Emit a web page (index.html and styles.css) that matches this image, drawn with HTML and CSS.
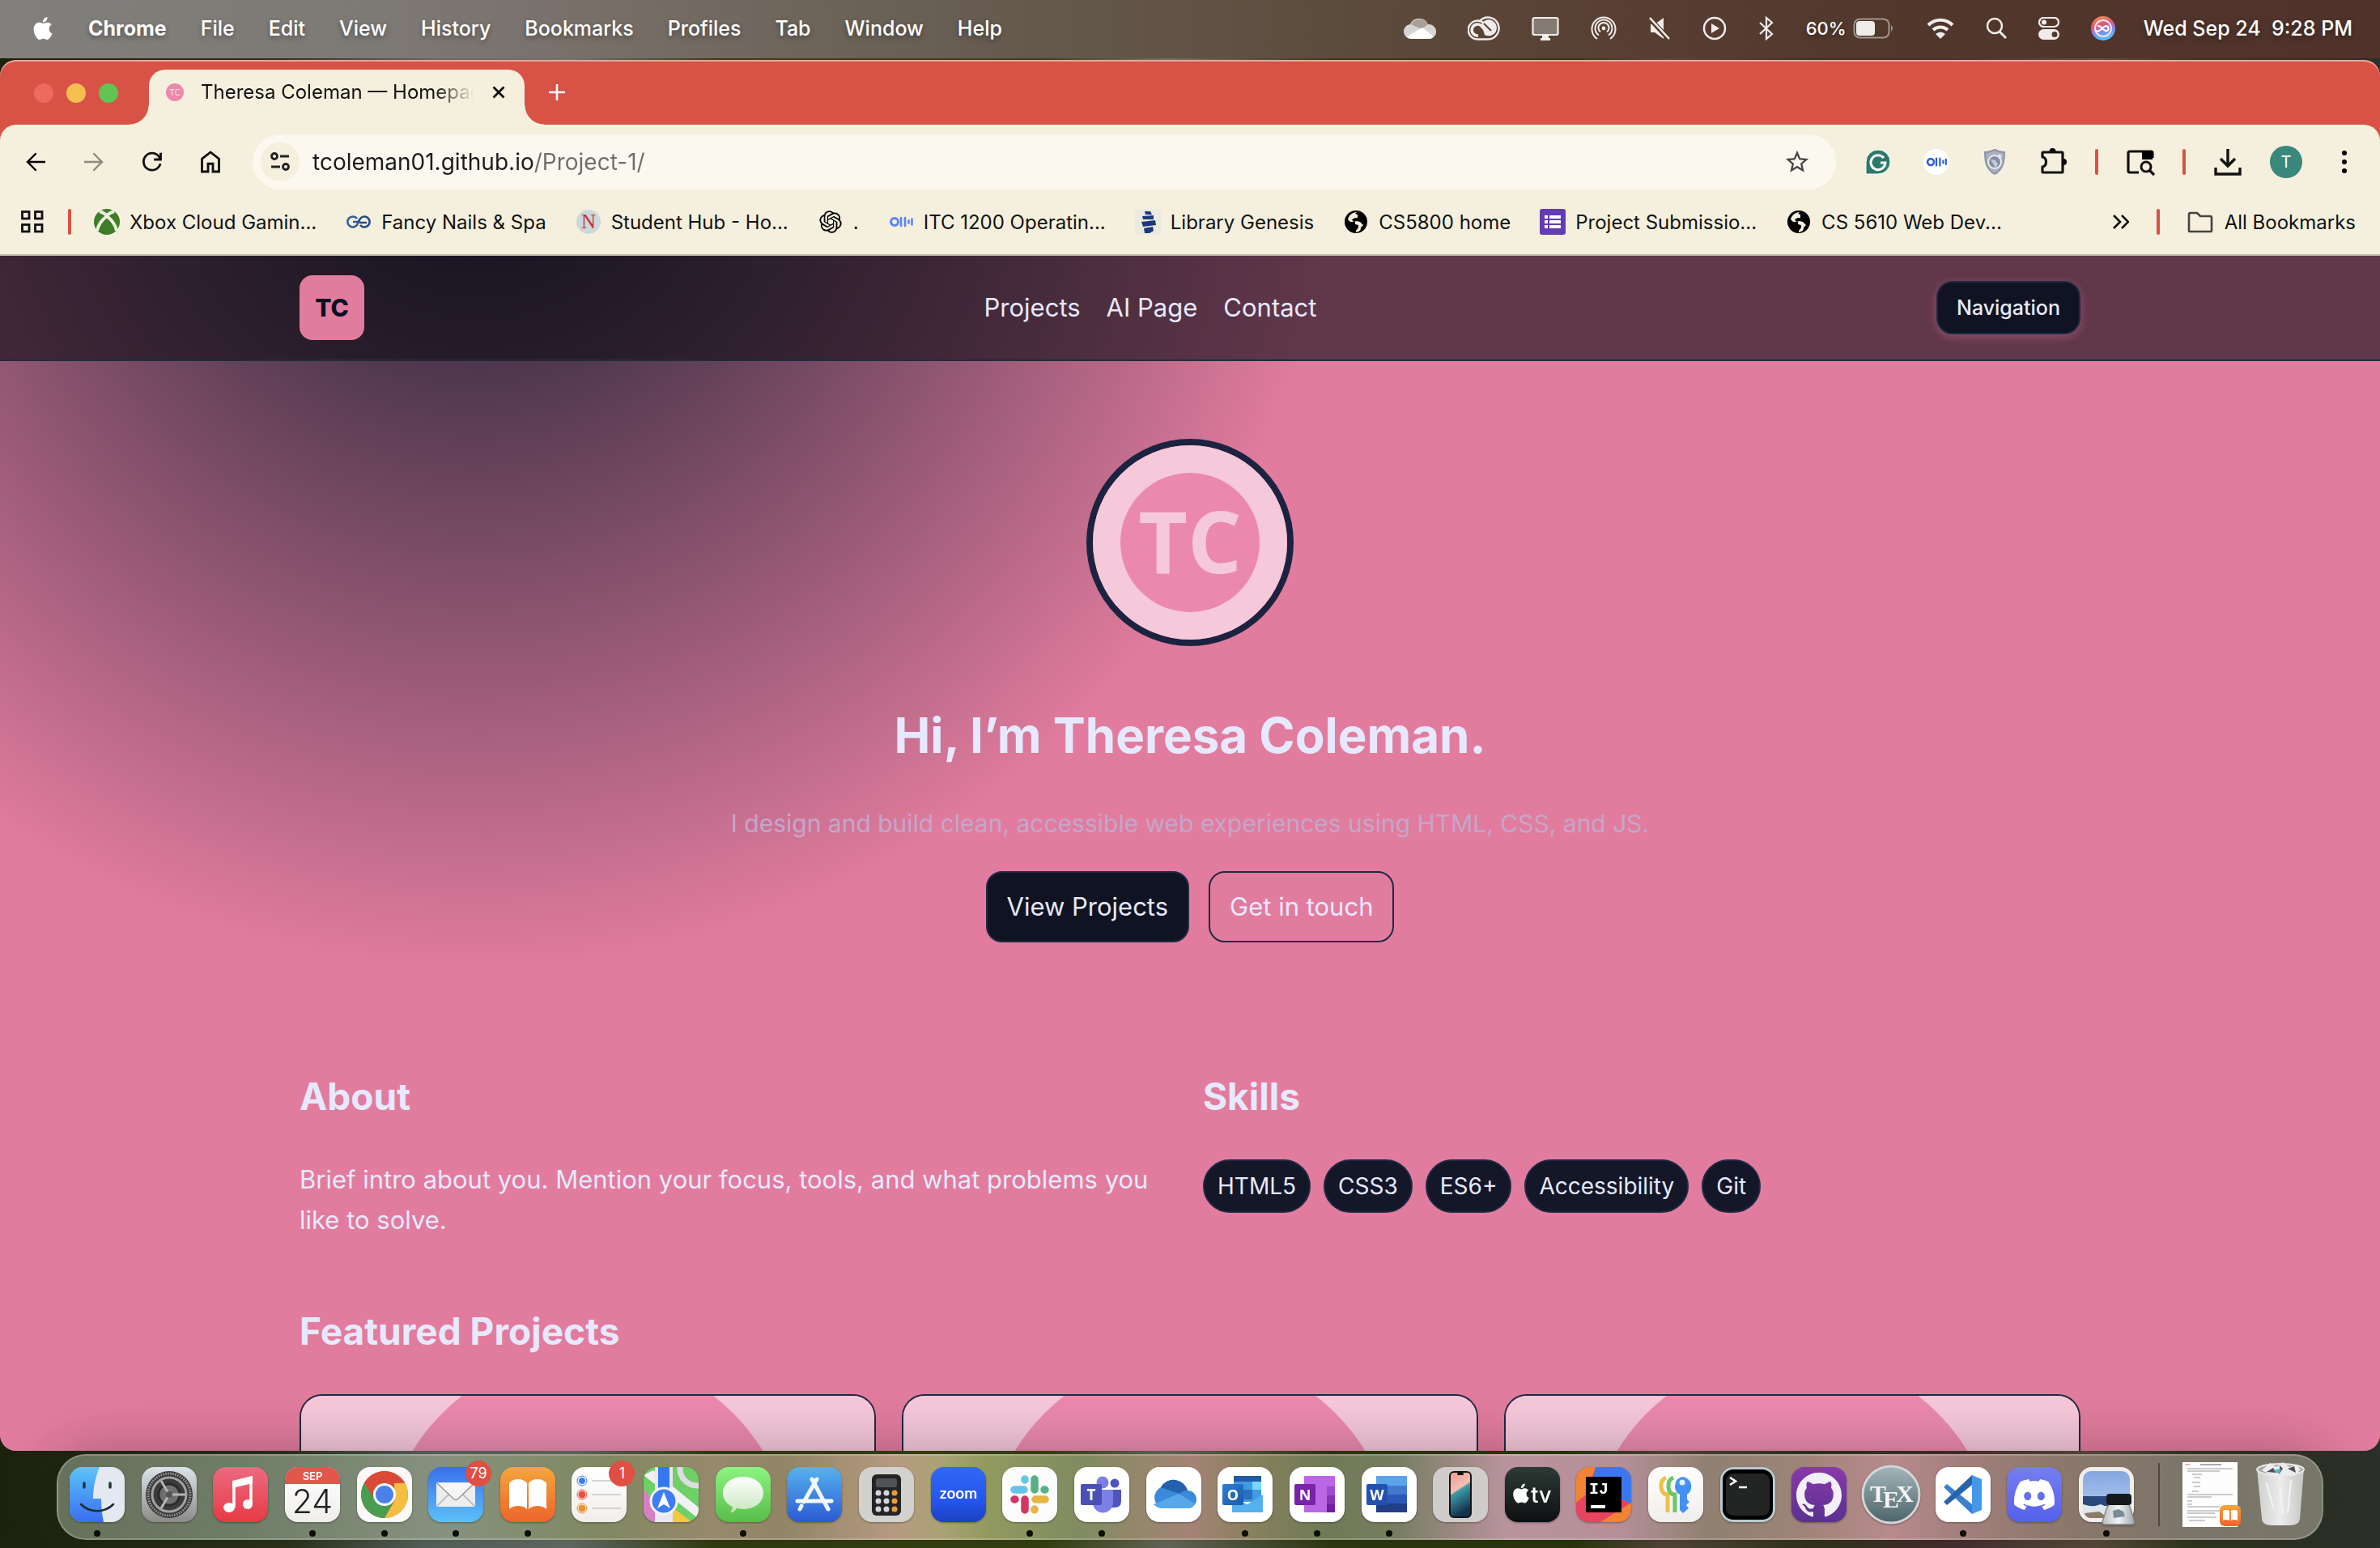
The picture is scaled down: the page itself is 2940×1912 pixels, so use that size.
FILE: index.html
```html
<!DOCTYPE html>
<html lang="en">
<head>
<meta charset="utf-8">
<title>Theresa Coleman — Homepage</title>
<link rel="stylesheet" href="styles.css">
</head>
<body class="desktop">

<svg class="defs" aria-hidden="true">
  <defs>
    <symbol id="apple" viewBox="0 0 24 24"><path d="M12.152 6.896c-.948 0-2.415-1.078-3.96-1.04-2.04.027-3.91 1.183-4.961 3.014-2.117 3.675-.546 9.103 1.519 12.09 1.013 1.454 2.208 3.09 3.792 3.039 1.52-.065 2.09-.987 3.935-.987 1.831 0 2.35.987 3.96.948 1.637-.026 2.676-1.48 3.676-2.948 1.156-1.688 1.636-3.325 1.662-3.415-.039-.013-3.182-1.221-3.22-4.857-.026-3.04 2.48-4.494 2.597-4.559-1.429-2.09-3.623-2.324-4.39-2.376-2-.156-3.675 1.09-4.61 1.09zM15.53 3.83c.843-1.012 1.4-2.427 1.245-3.83-1.207.052-2.662.805-3.532 1.818-.78.896-1.454 2.338-1.273 3.714 1.338.104 2.715-.688 3.559-1.701"/></symbol>
    <symbol id="otter" viewBox="0 0 32 32"><circle cx="8" cy="16" r="4.500" fill="none" stroke="currentColor" stroke-width="3"/><path d="M16 11v10M21 11v10M25.500 14.500v3M29.500 12.500v7" stroke="currentColor" stroke-width="2.600" stroke-linecap="round"/></symbol>
    <symbol id="globe" viewBox="0 0 32 32"><circle cx="16" cy="16" r="14" fill="#000"/><path d="M17 4c-5 0-10 4-11 9l3 3h6v3l4 1v3l-3 4v2c5-1 6-3 6-6l3-3-4-4-4-1-4 1-2-3 4-2h3V7l-3-1z" fill="#f4f0dd"/><path d="M4 15l6 6v6c-4-2-6-6-6-12z" fill="#000"/></symbol>
    <symbol id="avatar-art" viewBox="0 0 240 240"><rect width="240" height="240" fill="#f5c8da"/><circle cx="120" cy="120" r="86" fill="#eb89ac"/><text x="120" y="158" text-anchor="middle" font-family="Open Sans, sans-serif" font-weight="700" font-size="105" fill="#f5c8da">TC</text></symbol>
    <linearGradient id="g-finder" x2="0" y2="1"><stop stop-color="#5ac5f9"/><stop offset="1" stop-color="#3a6df0"/></linearGradient>
    <linearGradient id="g-grey" x2="0" y2="1"><stop stop-color="#dbe4ea"/><stop offset="1" stop-color="#8d8a88"/></linearGradient>
    <linearGradient id="g-music" x2="0" y2="1"><stop stop-color="#ec6a80"/><stop offset="1" stop-color="#e73a45"/></linearGradient>
    <linearGradient id="g-mail" x2="0" y2="1"><stop stop-color="#3a70ea"/><stop offset="1" stop-color="#5cc0f8"/></linearGradient>
    <linearGradient id="g-books" x2="0" y2="1"><stop stop-color="#f3a63d"/><stop offset="1" stop-color="#ee642b"/></linearGradient>
    <linearGradient id="g-msg" x2="0" y2="1"><stop stop-color="#8bf481"/><stop offset="1" stop-color="#58bd4a"/></linearGradient>
    <linearGradient id="g-bubble" x2="0" y2="1"><stop stop-color="#ffffff"/><stop offset="1" stop-color="#c9e6bf"/></linearGradient>
    <linearGradient id="g-store" x2="0" y2="1"><stop stop-color="#55b3ee"/><stop offset="1" stop-color="#2c5ad2"/></linearGradient>
    <linearGradient id="g-zoom" x2="0" y2="1"><stop stop-color="#3069f3"/><stop offset=".6" stop-color="#2456ef"/><stop offset="1" stop-color="#1c41bf"/></linearGradient>
    <linearGradient id="g-white" x2="0" y2="1"><stop stop-color="#ffffff"/><stop offset="1" stop-color="#f0eeeb"/></linearGradient>
    <linearGradient id="g-phone" x2=".3" y2="1"><stop stop-color="#f09a92"/><stop offset=".45" stop-color="#f4c0b2"/><stop offset=".5" stop-color="#3f9aa8"/><stop offset="1" stop-color="#12324f"/></linearGradient>
    <linearGradient id="g-tv" x2="0" y2="1"><stop stop-color="#2c3a36"/><stop offset="1" stop-color="#0d1012"/></linearGradient>
    <linearGradient id="g-git" x2="0" y2="1"><stop stop-color="#8a38ac"/><stop offset="1" stop-color="#5a3190"/></linearGradient>
    <linearGradient id="g-tex" x2="0" y2="1"><stop stop-color="#a3b6bb"/><stop offset="1" stop-color="#4c6469"/></linearGradient>
    <linearGradient id="g-discord" x2="0" y2="1"><stop stop-color="#757ff0"/><stop offset="1" stop-color="#5560ec"/></linearGradient>
    <linearGradient id="g-sky" x2="0" y2="1"><stop stop-color="#85a6e2"/><stop offset="1" stop-color="#b7cff0"/></linearGradient>
    <linearGradient id="g-bin"><stop stop-color="#cfcfce"/><stop offset=".5" stop-color="#ececec"/><stop offset="1" stop-color="#c6c6c5"/></linearGradient>
    <linearGradient id="g-jar"><stop stop-color="#b9bec1"/><stop offset=".5" stop-color="#f1f3f4"/><stop offset="1" stop-color="#9fa4a6"/></linearGradient>
    <linearGradient id="g-siri" x2=".3" y2="1"><stop stop-color="#f0a04b"/><stop offset=".45" stop-color="#e0557d"/><stop offset=".7" stop-color="#7e8bf0"/><stop offset="1" stop-color="#4cc3ff"/></linearGradient>
    <linearGradient id="g-office-o" x2="1" y2="1"><stop stop-color="#2f7fd6"/><stop offset="1" stop-color="#1c59a8"/></linearGradient>
  </defs>
</svg>

<header class="menubar">
  <nav class="menus" aria-label="Menu bar">
    <svg class="apple"><use href="#apple"/></svg>
    <strong>Chrome</strong><span>File</span><span>Edit</span><span>View</span><span>History</span><span>Bookmarks</span><span>Profiles</span><span>Tab</span><span>Window</span><span>Help</span>
  </nav>
  <div class="status">
    <svg width="40" height="28" viewBox="0 0 40 28"><path d="M10 27a9 9 0 0 1-2-18 12 12 0 0 1 22 0 9 9 0 0 1 2 18z" fill="#d8d4d1"/><path d="M9 9a12 12 0 0 1 21 0l-8 6z" fill="#a89f99"/><path d="M4 24l19-11 14 11q-2 3-6 3H10q-4 0-6-3z" fill="#fff"/></svg>
    <svg width="40" height="30" viewBox="0 0 40 30"><path d="M12 28.500h13a13.500 13.500 0 1 0-10-22.500M12 28.500A11.500 11.500 0 1 1 20 8.500" fill="none" stroke="#f0ecea" stroke-width="2.400"/><path d="M17 10a10 10 0 1 1 4 13z" fill="#f0ecea"/><path d="M17 24l-6-7" stroke="#58402f" stroke-width="2"/><path d="M13 24a7 7 0 1 1 4-12l9 10" fill="none" stroke="#f0ecea" stroke-width="3.600"/><path d="M20 9l9 9" stroke="#58402f" stroke-width="2"/></svg>
    <svg width="34" height="30" viewBox="0 0 34 30"><rect x="1.500" y="2" width="31" height="21" rx="2" fill="#857a71" stroke="#f0ecea" stroke-width="2.200"/><path d="M13 24h8v3h2v3H11v-3h2z" fill="#f0ecea"/></svg>
    <svg width="32" height="32" viewBox="0 0 32 32" fill="none" stroke="#f0ecea" stroke-width="2"><path d="M8 29a14.500 14.500 0 1 1 16 0M10 24.500a10.500 10.500 0 1 1 12 0M12 20.500a6.500 6.500 0 1 1 8 0"/><circle cx="16" cy="16" r="2.400" fill="#f0ecea" stroke="none"/></svg>
    <svg width="28" height="30" viewBox="0 0 28 30"><path d="M3 10h5l11-8v26l-11-8H3z" fill="#f0ecea"/><path d="M1 2l25 27" stroke="#58402f" stroke-width="6"/><path d="M2 2l24 26" stroke="#f0ecea" stroke-width="2.500"/></svg>
    <svg width="30" height="30" viewBox="0 0 30 30"><circle cx="15" cy="15" r="13" fill="none" stroke="#f0ecea" stroke-width="2.500"/><path d="M11 9l10 6-10 6z" fill="#f0ecea"/></svg>
    <svg width="20" height="30" viewBox="0 0 20 30"><path d="M2 8l15 14-7 6V2l7 6L2 22" fill="none" stroke="#f0ecea" stroke-width="2.200"/></svg>
    <div class="battery"><span>60%</span><svg width="52" height="26" viewBox="0 0 52 26"><rect x="1.500" y="1.500" width="43" height="23" rx="7" fill="none" stroke="#a29790" stroke-width="2"/><rect x="4" y="4" width="23" height="18" rx="4" fill="#f0ecea"/><path d="M47 9q4 4 0 8z" fill="#a29790"/></svg></div>
    <svg width="34" height="26" viewBox="0 0 34 26" fill="none" stroke="#f0ecea" stroke-width="4"><path d="M2 9a21 21 0 0 1 30 0M8 15a13 13 0 0 1 18 0"/><path d="M11 20q6-5 12 0l-6 6z" fill="#f0ecea" stroke="none"/></svg>
    <svg width="26" height="28" viewBox="0 0 26 28" fill="none" stroke="#f0ecea" stroke-width="2.500"><circle cx="11" cy="11" r="9"/><path d="M17 18l8 8" stroke-width="3"/></svg>
    <svg width="26" height="28" viewBox="0 0 26 28"><rect x="1" y="1" width="24" height="11" rx="5.500" fill="none" stroke="#f0ecea" stroke-width="2.200"/><circle cx="7" cy="6.500" r="3" fill="#f0ecea"/><rect y="15" width="26" height="13" rx="6.500" fill="#f0ecea"/><circle cx="20" cy="21.500" r="3.500" fill="#51372c"/></svg>
    <svg width="30" height="30" viewBox="0 0 30 30"><circle cx="15" cy="15" r="15" fill="url(#g-siri)"/><circle cx="15" cy="15" r="10" fill="none" stroke="#fbe3e6" stroke-width="2"/><path d="M6 18c6 3 9-7 13-6s3 7-1 6-5-7-10-6" fill="none" stroke="#fff" stroke-width="2"/></svg>
    <time>Wed Sep 24&nbsp; 9:28 PM</time>
  </div>
</header>

<section class="window" aria-label="Browser window">
  <div class="tabstrip">
    <div class="lights"><i class="light red"></i><i class="light amber"></i><i class="light green"></i></div>
    <div class="tab">
      <svg class="favicon" viewBox="0 0 22 22"><circle cx="11" cy="11" r="11" fill="#eb89ac"/><text x="11" y="15" text-anchor="middle" font-family="Open Sans, sans-serif" font-size="11" fill="#fbe0ea">TC</text></svg>
      <span class="tab-title">Theresa Coleman — Homepag</span>
      <button class="icon-btn" aria-label="Close tab"><svg width="16" height="16" viewBox="0 0 16 16"><path d="M1.500 1.500l13 13M14.500 1.500l-13 13" stroke="#111" stroke-width="2.800"/></svg></button>
    </div>
    <button class="icon-btn new-tab" aria-label="New tab"><svg width="20" height="20" viewBox="0 0 20 20"><path d="M10 0v20M0 10h20" stroke="#fff" stroke-width="2.600"/></svg></button>
  </div>

  <div class="toolbar">
    <button class="icon-btn tool" aria-label="Back"><svg width="36" height="36" viewBox="0 0 24 24"><path d="M20 11.200H7.300l5.700-5.800L11.900 4.300 4.200 12l7.700 7.700 1.100-1.100-5.700-5.800H20z"/></svg></button>
    <button class="icon-btn tool dim" aria-label="Forward"><svg width="36" height="36" viewBox="0 0 24 24"><path d="M4 11.200h12.700L11 5.400l1.100-1.100 7.700 7.700-7.700 7.700-1.100-1.100 5.700-5.800H4z"/></svg></button>
    <button class="icon-btn tool" aria-label="Reload"><svg width="36" height="36" viewBox="0 0 24 24"><path d="M18.700 13.500A7 7 0 1 1 17.500 7.500l1.200 1.500M19 4.500V10h-5.500" fill="none" stroke="#111" stroke-width="1.900"/></svg></button>
    <button class="icon-btn tool" aria-label="Home"><svg width="36" height="36" viewBox="0 0 24 24"><path d="M5 20V9.500l7-5.500 7 5.500V20h-5v-6.500h-4V20z" fill="none" stroke="#111" stroke-width="1.900"/></svg></button>
    <div class="omnibox">
      <button class="icon-btn site-info" aria-label="Site information"><svg width="30" height="30" viewBox="0 0 30 30" fill="none" stroke="#222" stroke-width="2.800"><circle cx="8" cy="8" r="3.500"/><path d="M15 8h11M4 21h11"/><circle cx="22" cy="21" r="3.500"/></svg></button>
      <input class="url" type="text" aria-label="Address" value="tcoleman01.github.io/Project-1/">
      <button class="icon-btn" aria-label="Bookmark this tab"><svg width="34" height="34" viewBox="0 0 24 24" fill="#444"><path d="M22 9.240l-7.190-.62L12 2 9.190 8.630 2 9.240l5.460 4.730L5.820 21 12 17.270 18.180 21l-1.630-7.030zM12 15.400l-3.760 2.270 1-4.280-3.320-2.880 4.380-.38L12 6.100l1.710 4.040 4.380.38-3.320 2.880 1 4.280z"/></svg></button>
    </div>
    <div class="extensions">
      <button class="icon-btn ext" aria-label="Grammarly"><svg width="32" height="32" viewBox="0 0 32 32"><path d="M1 31V16A15 15 0 1 1 16 31z" fill="#2c7a6a" stroke="#fff"/><path d="M23 11a9 9 0 1 0 2 6h-6" fill="none" stroke="#fff" stroke-width="3"/></svg></button>
      <button class="icon-btn ext otter" aria-label="Otter"><svg width="32" height="32" viewBox="0 0 32 32"><circle cx="16" cy="16" r="16" fill="#fff"/><use href="#otter" x="2" y="2" width="28" height="28"/></svg></button>
      <button class="icon-btn ext" aria-label="Privacy shield"><svg width="32" height="32" viewBox="0 0 32 32"><path d="M16 1q7 3 12 3c0 14-3 22-12 27C7 26 4 18 4 4q5 0 12-3z" fill="#a9b0bf" stroke="#8c94a6" stroke-width="2"/><circle cx="16" cy="16" r="8" fill="#8790a3" stroke="#e9ebf0" stroke-width="2"/><path d="M11 13l6 1 3 5-3 4z" fill="#c6cbd6"/><circle cx="22" cy="9" r="2.500" fill="#dfe2e8"/></svg></button>
      <button class="icon-btn ext" aria-label="Extensions"><svg width="36" height="36" viewBox="0 0 36 36"><path d="M13.500 5a4 4 0 0 1 8 0zM31 14a4 4 0 0 1 0 8z"/><path d="M6 6h23q1 0 1 1v23q0 1-1 1H6q-1 0-1-1v-6c6-1 6-11 0-12V7q0-1 1-1z" fill="none" stroke="#111" stroke-width="3.200" stroke-linejoin="round"/></svg></button>
      <i class="rule"></i>
      <button class="icon-btn ext" aria-label="Search with Lens"><svg width="36" height="36" viewBox="0 0 36 36"><path d="M16 31H5q-2 0-2-2V7q0-2 2-2h26q2 0 2 2v6" fill="none" stroke="#111" stroke-width="3.200"/><path d="M20 5h13v10H20z"/><circle cx="25" cy="24" r="6" fill="none" stroke="#111" stroke-width="3"/><path d="M29 28l6 6" stroke="#111" stroke-width="3.200"/></svg></button>
      <i class="rule"></i>
      <button class="icon-btn ext" aria-label="Downloads"><svg width="36" height="36" viewBox="0 0 36 36"><path d="M18 2v20M9 14l9 9 9-9M3 25v8h30v-8" fill="none" stroke="#111" stroke-width="3.400"/></svg></button>
      <button class="icon-btn ext profile" aria-label="Profile">T</button>
      <button class="icon-btn ext" aria-label="Menu"><svg width="8" height="30" viewBox="0 0 8 30"><circle cx="4" cy="4" r="3"/><circle cx="4" cy="15" r="3"/><circle cx="4" cy="26" r="3"/></svg></button>
    </div>
  </div>

  <nav class="bookmarks" aria-label="Bookmarks">
    <svg class="apps" width="28" height="28" viewBox="0 0 28 28" fill="none" stroke="#111" stroke-width="2.800"><rect x="1.500" y="1.500" width="8.500" height="8.500"/><rect x="17.500" y="1.500" width="8.500" height="8.500"/><rect x="1.500" y="17.500" width="8.500" height="8.500"/><rect x="17.500" y="17.500" width="8.500" height="8.500"/></svg>
    <i class="rule"></i>
    <a href="#"><svg class="bm" viewBox="0 0 32 32"><circle cx="16" cy="16" r="16" fill="#3d7e26"/><path d="M7 3q6 2 9 5 3-3 9-5M16 9C8 15 5 21 4 27M16 9c8 6 11 12 12 18" fill="none" stroke="#eef3e2" stroke-width="4"/></svg>Xbox Cloud Gamin...</a>
    <a href="#"><svg class="bm" viewBox="0 0 32 32" fill="none" stroke="#2f5f9f" stroke-width="2.600"><path d="M14 12a6.500 6.500 0 1 0 1 6v-2H9"/><path d="M17 17h9M18 20a6.500 6.500 0 1 0 0-8l-3 5" stroke="#274a86"/></svg>Fancy Nails &amp; Spa</a>
    <a href="#"><svg class="bm" viewBox="0 0 32 32"><circle cx="16" cy="16" r="15" fill="#cdd8da"/><text x="16" y="24" text-anchor="middle" font-family="Liberation Serif, serif" font-size="25" fill="#c2333b">N</text></svg>Student Hub - Ho...</a>
    <a href="#"><svg class="bm" viewBox="-2 -2 28 28"><path d="M22.2819 9.8211a5.9847 5.9847 0 0 0-.5157-4.9108 6.0462 6.0462 0 0 0-6.5098-2.9A6.0651 6.0651 0 0 0 4.9807 4.1818a5.9847 5.9847 0 0 0-3.9977 2.9 6.0462 6.0462 0 0 0 .7427 7.0966 5.98 5.98 0 0 0 .511 4.9107 6.051 6.051 0 0 0 6.5146 2.9001A5.9847 5.9847 0 0 0 13.2599 24a6.0557 6.0557 0 0 0 5.7718-4.2058 5.9894 5.9894 0 0 0 3.9977-2.9001 6.0557 6.0557 0 0 0-.7475-7.0729zm-9.022 12.6081a4.4755 4.4755 0 0 1-2.8764-1.0408l.1419-.0804 4.7783-2.7582a.7948.7948 0 0 0 .3927-.6813v-6.7369l2.02 1.1686a.071.071 0 0 1 .038.052v5.5826a4.504 4.504 0 0 1-4.4945 4.4944zm-9.6607-4.1254a4.4708 4.4708 0 0 1-.5346-3.0137l.142.0852 4.783 2.7582a.7712.7712 0 0 0 .7806 0l5.8428-3.3685v2.3324a.0804.0804 0 0 1-.0332.0615L9.74 19.9502a4.4992 4.4992 0 0 1-6.1408-1.6464zM2.3408 7.8956a4.485 4.485 0 0 1 2.3655-1.9728V11.6a.7664.7664 0 0 0 .3879.6765l5.8144 3.3543-2.0201 1.1685a.0757.0757 0 0 1-.071 0l-4.8303-2.7865A4.504 4.504 0 0 1 2.3408 7.872zm16.5963 3.8558L13.1038 8.364 15.1192 7.2a.0757.0757 0 0 1 .071 0l4.8303 2.7913a4.4944 4.4944 0 0 1-.6765 8.1042v-5.6772a.79.79 0 0 0-.407-.667zm2.0107-3.0231l-.142-.0852-4.7735-2.7818a.7759.7759 0 0 0-.7854 0L9.409 9.2297V6.8974a.0662.0662 0 0 1 .0284-.0615l4.8303-2.7866a4.4992 4.4992 0 0 1 6.6802 4.66zM8.3065 12.863l-2.02-1.1638a.0804.0804 0 0 1-.038-.0567V6.0742a4.4992 4.4992 0 0 1 7.3757-3.4537l-.142.0805L8.704 5.459a.7948.7948 0 0 0-.3927.6813zm1.0976-2.3654l2.602-1.4998 2.6069 1.4998v2.9994l-2.5974 1.4997-2.6067-1.4997Z"/></svg>.</a>
    <a href="#" class="otter-link"><svg class="bm"><use href="#otter"/></svg><span>ITC 1200 Operatin...</span></a>
    <a href="#"><svg class="bm" viewBox="0 0 32 32"><rect width="32" height="32" fill="#eceadf"/><path d="M12 3h7l2 4h-8zM9 9l14-1v5H10zM8 16l17-2 1 6-16 2zM11 24l11-2 1 5-5 3h-6z" fill="#1c3a7c"/></svg>Library Genesis</a>
    <a href="#"><svg class="bm"><use href="#globe"/></svg>CS5800 home</a>
    <a href="#"><svg class="bm" viewBox="0 0 32 32"><rect width="32" height="32" rx="3" fill="#643bb0"/><path d="M6 8h4v4H6zM12 8h14v4H12zM6 14h4v4H6zM12 14h14v4H12zM6 20h4v4H6zM12 20h14v4H12z" fill="#fff"/></svg>Project Submissio...</a>
    <a href="#"><svg class="bm"><use href="#globe"/></svg>CS 5610 Web Dev...</a>
    <div class="bookmarks-end">
      <svg width="20" height="18" viewBox="0 0 20 18"><path d="M1 1l8 8-8 8M11 1l8 8-8 8" fill="none" stroke="#111" stroke-width="2.600"/></svg>
      <i class="rule"></i>
      <a href="#"><svg class="bm" viewBox="0 0 32 32"><path d="M2 27V7q0-2 2-2h8l4 4h12q2 0 2 2v16q0 1-1 1H3q-1 0-1-1z" fill="none" stroke="#444" stroke-width="2.600"/></svg>All Bookmarks</a>
    </div>
  </nav>

  <div class="page">
    <header class="site-header">
      <div class="container header-row">
        <a class="logo" href="#">TC</a>
        <nav class="site-nav"><a href="#projects">Projects</a><a href="#ai">AI Page</a><a href="#contact">Contact</a></nav>
        <button class="nav-button">Navigation</button>
      </div>
    </header>
    <main class="container">
      <section class="hero">
        <svg class="avatar"><use href="#avatar-art"/></svg>
        <h1>Hi, I’m Theresa Coleman.</h1>
        <p>I design and build clean, accessible web experiences using HTML, CSS, and JS.</p>
        <div class="actions"><a class="btn primary" href="#projects">View Projects</a><a class="btn" href="#contact">Get in touch</a></div>
      </section>
      <div class="columns">
        <section>
          <h2>About</h2>
          <p>Brief intro about you. Mention your focus, tools, and what problems you like to solve.</p>
        </section>
        <section>
          <h2>Skills</h2>
          <ul class="skills"><li>HTML5</li><li>CSS3</li><li>ES6+</li><li>Accessibility</li><li>Git</li></ul>
        </section>
      </div>
      <section id="projects">
        <h2>Featured Projects</h2>
        <div class="cards">
          <article class="card"><svg viewBox="0 0 240 135" preserveAspectRatio="xMidYMid slice"><use href="#avatar-art" y="-52" width="240" height="240"/></svg></article>
          <article class="card"><svg viewBox="0 0 240 135" preserveAspectRatio="xMidYMid slice"><use href="#avatar-art" y="-52" width="240" height="240"/></svg></article>
          <article class="card"><svg viewBox="0 0 240 135" preserveAspectRatio="xMidYMid slice"><use href="#avatar-art" y="-52" width="240" height="240"/></svg></article>
        </div>
      </section>
    </main>
  </div>
</section>

<footer class="dock">
  <ul class="apps-row">
    <li class="app running"><svg viewBox="0 0 68 68"><rect width="68" height="68" rx="16" fill="#e4e8f0"/><path d="M16 0h21c-5 12-8 26-8 39h10c0 10 1 20 3 29H16A16 16 0 0 1 0 52V16A16 16 0 0 1 16 0z" fill="url(#g-finder)"/><path d="M18 20v5M50 20v5" stroke="#23323f" stroke-width="3.500" stroke-linecap="round"/><path d="M14 46c11 11 29 11 40 0" fill="none" stroke="#1d2a33" stroke-width="2.500" stroke-linecap="round"/></svg></li>
    <li class="app"><svg viewBox="0 0 68 68"><rect width="68" height="68" rx="16" fill="url(#g-grey)"/><circle cx="34" cy="34" r="29" fill="#3b3b3c"/><circle cx="34" cy="34" r="26" fill="none" stroke="#9a9a9a" stroke-width="3" stroke-dasharray="1.500 1.500"/><circle cx="34" cy="34" r="21" fill="none" stroke="#a2a2a2" stroke-width="3"/><circle cx="34" cy="34" r="13" fill="#6f6f70" stroke="#2c2c2c" stroke-width="3"/><path d="M34 34h20M34 34L24 17M34 34L24 51" stroke="#b5b5b5" stroke-width="3"/><circle cx="34" cy="34" r="4" fill="#555"/></svg></li>
    <li class="app"><svg viewBox="0 0 68 68"><rect width="68" height="68" rx="16" fill="url(#g-music)"/><path d="M26 50V19l21-6v33" fill="none" stroke="#fff" stroke-width="3.500"/><path d="M24 17l25-6v9l-25 6z" fill="#fff"/><ellipse cx="20" cy="50" rx="7" ry="6" fill="#fff"/><ellipse cx="43" cy="46" rx="6" ry="6" fill="#fff"/></svg></li>
    <li class="app running"><svg viewBox="0 0 68 68"><rect width="68" height="68" rx="16" fill="url(#g-white)"/><path d="M0 21v-5A16 16 0 0 1 16 0h36a16 16 0 0 1 16 16v5z" fill="#e2574c"/><text x="34" y="16" text-anchor="middle" font-family="Inter, sans-serif" font-weight="600" font-size="13" fill="#fff">SEP</text><text x="34" y="57" text-anchor="middle" font-family="Inter, sans-serif" font-weight="300" font-size="41" fill="#222">24</text></svg></li>
    <li class="app running"><svg viewBox="0 0 68 68"><rect width="68" height="68" rx="16" fill="#faf9f8"/><circle cx="34" cy="34" r="29" fill="#d94a38"/><path d="M9 19.500A29 29 0 0 0 34 63l12-22-12-7-10 4z" fill="#4a9c50"/><path d="M59 19.500A29 29 0 0 1 34 63l12.500-21.500L46 20z" fill="#f3bf42"/><path d="M34 19.500h25A29 29 0 0 0 9 19.500l12.500 20z" fill="#d94a38"/><circle cx="34" cy="34" r="14" fill="#fff"/><circle cx="34" cy="34" r="11" fill="#4a80ea"/></svg></li>
    <li class="app running"><svg viewBox="0 0 68 68"><rect width="68" height="68" rx="16" fill="url(#g-mail)"/><rect x="10" y="19" width="48" height="30" rx="2" fill="#ededed"/><path d="M11 48l17-17M57 48L40 31" stroke="#b0b0b0" stroke-width="1.500"/><path d="M11 20l20 19q3 3 6 0l20-19" fill="#f6f6f6" stroke="#999" stroke-width="1.500"/></svg><span class="badge">79</span></li>
    <li class="app running"><svg viewBox="0 0 68 68"><rect width="68" height="68" rx="16" fill="url(#g-books)"/><path d="M33 20q-4-5-11-5t-11 5v32q4-4 11-4t11 4zM35 20q4-5 11-5t11 5v32q-4-4-11-4t-11 4z" fill="#fff"/></svg></li>
    <li class="app"><svg viewBox="0 0 68 68"><rect width="68" height="68" rx="16" fill="url(#g-white)"/><path d="M25 17h36M25 34h36M25 51h36" stroke="#c9c9c9" stroke-width="1.500"/><circle cx="13" cy="17" r="4.500" fill="#3b7cee" stroke="#fff"/><circle cx="13" cy="34" r="4.500" fill="#e8503f"/><circle cx="13" cy="51" r="4.500" fill="#ec9235"/><g fill="none"><circle cx="13" cy="17" r="6" stroke="#3b7cee"/><circle cx="13" cy="34" r="6" stroke="#e8503f"/><circle cx="13" cy="51" r="6" stroke="#ec9235"/></g></svg><span class="badge">1</span></li>
    <li class="app"><svg viewBox="0 0 68 68"><clipPath id="c-map"><rect width="68" height="68" rx="16"/></clipPath><g clip-path="url(#c-map)"><path d="M0 0h68v68H0z" fill="#6fd067"/><path d="M0 28l40 40H0z" fill="#d77fc4"/><path d="M0 10l68 54v-14L12 4z" fill="#f1f1f3"/><path d="M36 68V50l24 18z" fill="#f2c940"/><path d="M14 0h22v68H14z" fill="#e8e8ee"/><path d="M18 0h14v40H18z" fill="#3478f0"/><circle cx="66" cy="2" r="21" fill="none" stroke="#dcdce2" stroke-width="7"/></g><circle cx="25" cy="42" r="16" fill="#3e7df0" stroke="#f4f4f6" stroke-width="3"/><path d="M25 31l8 20-8-5-8 5z" fill="#fff"/></svg></li>
    <li class="app running"><svg viewBox="0 0 68 68"><rect width="68" height="68" rx="16" fill="url(#g-msg)"/><path d="M34 12c15 0 25 9 25 20S49 52 34 52l-8-1q-3 5-8 5 3-3 3-7C13 46 9 39 9 32c0-11 10-20 25-20z" fill="url(#g-bubble)"/></svg></li>
    <li class="app"><svg viewBox="0 0 68 68"><rect width="68" height="68" rx="16" fill="url(#g-store)"/><path d="M31 15l20 37M37 15L21 43M13 42h42M18 48l-2 4" stroke="#f3f8fd" stroke-width="5" stroke-linecap="round"/></svg></li>
    <li class="app"><svg viewBox="0 0 68 68"><rect width="68" height="68" rx="16" fill="#d3d1ce"/><rect x="16" y="9" width="36" height="51" rx="6" fill="#242426"/><rect x="21" y="14" width="26" height="11" rx="3" fill="#505254"/><g fill="#d5d5d5"><circle cx="24" cy="32" r="3.500"/><circle cx="34" cy="32" r="3.500"/><circle cx="24" cy="42" r="3.500"/><circle cx="34" cy="42" r="3.500"/><circle cx="24" cy="52" r="3.500"/><circle cx="34" cy="52" r="3.500"/></g><g fill="#f09a38"><circle cx="44" cy="32" r="3.500"/><circle cx="44" cy="42" r="3.500"/><circle cx="44" cy="52" r="3.500"/></g></svg></li>
    <li class="app"><svg viewBox="0 0 68 68"><rect width="68" height="68" rx="16" fill="url(#g-zoom)"/><text x="34" y="39" text-anchor="middle" font-family="Lato, sans-serif" font-weight="700" font-size="19" fill="#fff">zoom</text></svg></li>
    <li class="app running"><svg viewBox="0 0 68 68"><rect width="68" height="68" rx="16" fill="#fcfcfc"/><g stroke-width="9.500" stroke-linecap="round"><path d="M15 28h12M28 15v1" stroke="#66c3ea"/><path d="M40 15v13M52 28h1" stroke="#55b184"/><path d="M53 40H41M40 52v1" stroke="#e6b646"/><path d="M28 53V40M15 40h1" stroke="#d33661"/></g></svg></li>
    <li class="app running"><svg viewBox="0 0 68 68"><rect width="68" height="68" rx="16" fill="#fff"/><circle cx="50" cy="20" r="5.500" fill="#5055bd"/><path d="M44 28h14v14q0 8-8 8h-6z" fill="#5055bd"/><circle cx="35" cy="19" r="7.500" fill="#7b80e4"/><path d="M23 28h25v16a12.500 12.500 0 0 1-25 0z" fill="#7b80e4"/><rect x="8" y="21" width="26" height="26" rx="2" fill="#4a50b5"/><text x="21" y="41" text-anchor="middle" font-family="Open Sans, sans-serif" font-weight="700" font-size="19" fill="#fff">T</text></svg></li>
    <li class="app"><svg viewBox="0 0 68 68"><rect width="68" height="68" rx="16" fill="#fff"/><path d="M20 51a14 14 0 0 1-2-26 18 18 0 0 1 33 4 11 11 0 0 1 0 22z" fill="#3a8ad9"/><path d="M18 25a18 18 0 0 1 33 4q-6 0-10 4z" fill="#2560ae"/><path d="M9 46l31-13 20 12q-3 6-9 6H20q-7 0-11-5z" fill="#56a8ea"/></svg></li>
    <li class="app running"><svg viewBox="0 0 68 68"><rect width="68" height="68" rx="16" fill="#fff"/><rect x="20" y="11" width="34" height="32" fill="#3f9be4"/><path d="M20 11h34v7H20z" fill="#2359a5"/><path d="M43 18h11v10H43z" fill="#7ad7fb"/><path d="M31 28h12v12H31z" fill="#2a70bf"/><path d="M18 38l19 8 19-12v22H18z" fill="#56b0ec"/><rect x="6" y="21" width="26" height="26" rx="2" fill="url(#g-office-o)"/><text x="19" y="41" text-anchor="middle" font-family="Open Sans, sans-serif" font-weight="700" font-size="18" fill="#fff">O</text></svg></li>
    <li class="app running"><svg viewBox="0 0 68 68"><rect width="68" height="68" rx="16" fill="#fff"/><rect x="18" y="11" width="38" height="45" rx="1" fill="#bb66e4"/><path d="M46 24h10v11H46z" fill="#9e4bd0"/><path d="M46 35h10v11H46z" fill="#8534b5"/><path d="M46 46h10v10H46z" fill="#6f1da3"/><rect x="6" y="21" width="26" height="26" rx="2" fill="#7a22a8"/><text x="19" y="41" text-anchor="middle" font-family="Open Sans, sans-serif" font-weight="700" font-size="18" fill="#fff">N</text></svg></li>
    <li class="app running"><svg viewBox="0 0 68 68"><rect width="68" height="68" rx="16" fill="#fff"/><path d="M18 11h38v12H18z" fill="#5ba4ea"/><path d="M18 23h38v11H18z" fill="#4279cd"/><path d="M18 34h38v11H18z" fill="#2c59b8"/><path d="M18 45h38v11H18z" fill="#213f86"/><rect x="6" y="21" width="26" height="26" rx="2" fill="#2351b0"/><text x="19" y="41" text-anchor="middle" font-family="Open Sans, sans-serif" font-weight="700" font-size="18" fill="#fff">W</text></svg></li>
    <li class="app"><svg viewBox="0 0 68 68"><rect width="68" height="68" rx="16" fill="#d0cccb"/><rect x="21" y="6" width="26" height="56" rx="5" fill="url(#g-phone)" stroke="#141414" stroke-width="2"/><rect x="30" y="7" width="8" height="3" rx="1.500" fill="#111"/></svg></li>
    <li class="app"><svg viewBox="0 0 68 68"><rect width="68" height="68" rx="16" fill="url(#g-tv)"/><use href="#apple" x="8" y="20" width="24" height="25" fill="#fff"/><text x="45" y="44" text-anchor="middle" font-family="Inter, sans-serif" font-weight="500" font-size="27" fill="#fff">tv</text></svg></li>
    <li class="app"><svg viewBox="0 0 68 68"><clipPath id="c-ij"><rect width="68" height="68" rx="16"/></clipPath><g clip-path="url(#c-ij)"><path d="M0 0h68v68H0z" fill="#e8435f"/><path d="M0 0h24L12 34 0 44z" fill="#ee8434"/><path d="M24 0h44v46L20 20z" fill="#3a78f2"/><path d="M30 68l38-24v24z" fill="#ee8434"/></g><path d="M12 12h44v44H12z"/><text x="16" y="33" font-family="Liberation Mono, monospace" font-weight="700" font-size="20" fill="#fff">IJ</text><path d="M18 47h18v4H18z" fill="#fff"/></svg></li>
    <li class="app"><svg viewBox="0 0 68 68"><rect width="68" height="68" rx="16" fill="url(#g-white)"/><g fill="none" stroke-width="5"><path d="M22 13q-7 3-6 12t8 9v22" stroke="#edc243"/><path d="M31 13q-7 3-6 12t8 9v22" stroke="#6cc668"/></g><path d="M42 12a12 12 0 0 1 6 22v6l3 3-4 4 3 4-7 6-4-4V34a12 12 0 0 1 3-22z" fill="#4592f5"/><circle cx="42" cy="19" r="3.500" fill="#e6f0fc"/></svg></li>
    <li class="app"><svg viewBox="0 0 68 68"><rect width="68" height="68" rx="16" fill="#b9c9cf"/><rect x="3" y="3" width="62" height="62" rx="13" fill="#000"/><rect x="7" y="8" width="54" height="52" rx="9" fill="#232424"/><path d="M12 13l7 4.500-7 4.500M23 25h10" fill="none" stroke="#fff" stroke-width="2.600"/></svg></li>
    <li class="app"><svg viewBox="0 0 68 68"><rect width="68" height="68" rx="16" fill="url(#g-git)"/><svg x="6" y="6" width="56" height="56" viewBox="0 0 24 24"><path fill="#f3eff7" d="M12 .297c-6.630 0-12 5.373-12 12 0 5.303 3.438 9.800 8.205 11.385.6.113.82-.258.82-.577 0-.285-.01-1.040-.015-2.040-3.338.724-4.042-1.610-4.042-1.610C4.422 18.070 3.633 17.700 3.633 17.700c-1.087-.744.084-.729.084-.729 1.205.084 1.838 1.236 1.838 1.236 1.070 1.835 2.809 1.305 3.495.998.108-.776.417-1.305.76-1.605-2.665-.3-5.466-1.332-5.466-5.930 0-1.310.465-2.380 1.235-3.220-.135-.303-.54-1.523.105-3.176 0 0 1.005-.322 3.300 1.230.96-.267 1.980-.399 3-.405 1.020.006 2.040.138 3 .405 2.280-1.552 3.285-1.230 3.285-1.230.645 1.653.24 2.873.12 3.176.765.84 1.230 1.910 1.230 3.220 0 4.610-2.805 5.625-5.475 5.920.42.36.81 1.096.81 2.220 0 1.606-.015 2.896-.015 3.286 0 .315.21.69.825.57C20.565 22.092 24 17.592 24 12.297c0-6.627-5.373-12-12-12"/></svg></svg></li>
    <li class="app"><svg viewBox="0 0 68 68"><circle cx="34" cy="34" r="35" fill="url(#g-tex)" stroke="#d5d5d5" stroke-width="3"/><g font-family="Liberation Serif, serif" font-weight="700" font-size="30" fill="#f4f4f4" text-anchor="middle"><text x="18" y="43">T</text><text x="34" y="50">E</text><text x="51" y="43">X</text></g></svg></li>
    <li class="app running"><svg viewBox="0 0 68 68"><rect width="68" height="68" rx="16" fill="#fff"/><path d="M10 25l4-4 31 25v12z" fill="#3a80cf"/><path d="M10 43l4 4 31-25V10z" fill="#2963a8"/><path d="M45 10l12 5v38l-12 5z" fill="#4597e8"/></svg></li>
    <li class="app"><svg viewBox="0 0 68 68"><rect width="68" height="68" rx="16" fill="url(#g-discord)"/><svg x="9" y="9" width="50" height="50" viewBox="0 0 24 24"><path fill="#fff" d="M20.317 4.3698a19.7913 19.7913 0 00-4.8851-1.5152.0741.0741 0 00-.0785.0371c-.211.3753-.4447.8648-.6083 1.2495-1.8447-.2762-3.68-.2762-5.4868 0-.1636-.3933-.4058-.8742-.6177-1.2495a.077.077 0 00-.0785-.037 19.7363 19.7363 0 00-4.8852 1.515.0699.0699 0 00-.0321.0277C.5334 9.0458-.319 13.5799.0992 18.0578a.0824.0824 0 00.0312.0561c2.0528 1.5076 4.0413 2.4228 5.9929 3.0294a.0777.0777 0 00.0842-.0276c.4616-.6304.8731-1.2952 1.226-1.9942a.076.076 0 00-.0416-.1057c-.6528-.2476-1.2743-.5495-1.8722-.8923a.077.077 0 01-.0076-.1277c.1258-.0943.2517-.1923.3718-.2914a.0743.0743 0 01.0776-.0105c3.9278 1.7933 8.18 1.7933 12.0614 0a.0739.0739 0 01.0785.0095c.1202.099.246.1981.3728.2924a.077.077 0 01-.0066.1276 12.2986 12.2986 0 01-1.873.8914.0766.0766 0 00-.0407.1067c.3604.698.7719 1.3628 1.225 1.9932a.076.076 0 00.0842.0286c1.961-.6067 3.9495-1.5219 6.0023-3.0294a.077.077 0 00.0313-.0552c.5004-5.177-.8382-9.6739-3.5485-13.6604a.061.061 0 00-.0312-.0286zM8.02 15.3312c-1.1825 0-2.1569-1.0857-2.1569-2.419 0-1.3332.9555-2.4189 2.157-2.4189 1.2108 0 2.1757 1.0952 2.1568 2.419 0 1.3332-.9555 2.4189-2.1569 2.4189zm7.9748 0c-1.1825 0-2.1569-1.0857-2.1569-2.419 0-1.3332.9554-2.4189 2.1569-2.4189 1.2108 0 2.1757 1.0952 2.1568 2.419 0 1.3332-.946 2.4189-2.1568 2.4189Z"/></svg></svg></li>
    <li class="app running"><svg viewBox="0 0 68 68"><rect width="68" height="68" rx="16" fill="#f0eeec"/><rect x="5" y="5" width="58" height="58" rx="10" fill="url(#g-sky)"/><path d="M5 36h58v12H5z" fill="#2a4a7d"/><path d="M5 46l12 3 10-3 12 5 24-3v5q0 10-10 10H15Q5 63 5 53z" fill="#dfe7ee"/><path d="M7 57l18-2 12 8H15q-6 0-8-6z" fill="#8a7a66"/><path d="M37 46h25l2 6 5 16q0 3-4 3H33q-4 0-4-3l5-16z" fill="url(#g-jar)" stroke="#83878a" stroke-width="1.500"/><path d="M42 54l7-2 6 3 2 6-14 2z" fill="#7b8b98"/><rect x="34" y="33" width="31" height="14" rx="4" fill="#17181a"/></svg></li>
  </ul>
  <i class="dock-rule"></i>
  <svg class="doc" viewBox="0 0 72 80"><path d="M0 0h68v80H0z" fill="#fdfdfd"/><g stroke="#9a9a9a" stroke-width="1"><path d="M6 8h56M6 11h40M12 15h12M14 19h8M12 25h10M14 30h8M12 36h8M6 40h56M6 43h30M6 48h6M6 52h6M6 55h40M6 60h50M6 63h34M6 68h36M8 72h20"/></g><path d="M3 3h6" stroke="#e0695f"/><path d="M22 3h26" stroke="#555"/><rect x="46" y="53" width="26" height="26" rx="6" fill="url(#g-books)"/><path d="M58 60q-4-2-8 0v12q4-2 8 0zM60 60q4-2 8 0v12q-4-2-8 0z" fill="#fff"/></svg>
  <svg class="trash" viewBox="0 0 62 80"><path d="M2 8h58l-5 62q-1 8-12 8H20Q9 78 8 70z" fill="url(#g-bin)"/><ellipse cx="31" cy="9" rx="29" ry="7" fill="#a9aaaa" stroke="#e8e8e8" stroke-width="2"/><path d="M8 10l10-9 8 5 8-6 8 6 9-3 5 6-8 8-12-2-12 3z" fill="#ececec"/><path d="M14 12l8-5 4 6zM40 8l8-3 2 8zM30 4l4 4-4 6z" fill="#4b4e52"/><path d="M22 10l10-2-2 7z" fill="#55b2c6"/><path d="M14 26l8 30M44 22l-4 40M30 30l4 34" stroke="#f4f4f4" stroke-width="2"/></svg>
</footer>
</body>
</html>
```

FILE: styles.css
```css
*, *::before, *::after { box-sizing: border-box; }

body, h1, h2, p, ul { margin: 0; padding: 0; }
ul { list-style: none; }
a { color: inherit; text-decoration: none; }
button { font: inherit; cursor: pointer; }
svg { display: block; flex: none; }

.defs { position: absolute; width: 0; height: 0; }

.desktop {
  display: flex;
  flex-direction: column;
  height: 100vh;
  padding-bottom: 10px;
  overflow: hidden;
  font-family: Inter, "Liberation Sans", sans-serif;
  background: linear-gradient(90deg, #1b230f 0%, #2c351b 12%, #5c6a62 18%, #6a746c 24%, #35400f 30%, #3a4612 44%, #6f7160 49%, #303c12 56%, #2a3a0c 66%, #5a4a3c 70%, #34371c 76%, #4a3030 82%, #5e503f 88%, #343a20 92%, #2c2f2a 100%);
}

/* Menu bar */
.menubar {
  flex: none;
  display: flex;
  justify-content: space-between;
  align-items: center;
  height: 72px;
  margin-bottom: 2px;
  padding: 0 34px 2px 39px;
  color: #fff;
  font-size: 25px;
  font-weight: 500;
  white-space: nowrap;
  text-shadow: 0 3px 6px rgba(0, 0, 0, .35);
  background: linear-gradient(90deg, #82807c 0%, #7d7975 16%, #79706a 24%, #6f675d 32%, #63564a 46%, #5b4a3b 58%, #583f32 68%, #51372c 80%, #50322a 100%);
}
.menus, .status { display: flex; align-items: center; }
.menus { gap: 42px; }
.menus strong { font-weight: 700; }
.status { gap: 39px; }
.status time { margin-left: -4px; }
.apple { width: 28px; height: 32px; fill: #fff; }
.battery { display: flex; align-items: center; gap: 8px; font-size: 22px; }

/* Browser window */
.window {
  flex: 1;
  min-height: 0;
  display: flex;
  flex-direction: column;
  overflow: hidden;
  border-radius: 20px;
  background: #d85246;
  box-shadow: inset 0 2px 0 #e9a49c;
}
.icon-btn {
  display: flex;
  align-items: center;
  justify-content: center;
  padding: 0;
  border: 0;
  background: none;
}
.tabstrip {
  flex: none;
  display: flex;
  align-items: center;
  height: 80px;
  padding: 12px 40px 0 42px;
}
.lights { display: flex; gap: 16px; margin: 0 38px 10px 0; }
.light { width: 24px; height: 24px; border-radius: 50%; }
.red { background: #ed6a5e; }
.amber { background: #f4bf4f; }
.green { background: #61c554; }
.tab {
  position: relative;
  display: flex;
  align-items: center;
  width: 464px;
  height: 68px;
  padding: 0 24px 12px 21px;
  border-radius: 20px 20px 0 0;
  background: #f4f0dd;
}
.tab::before, .tab::after {
  content: "";
  position: absolute;
  bottom: 0;
  width: 24px;
  height: 24px;
}
.tab::before { left: -24px; background: radial-gradient(circle at 0 0, transparent 23px, #f4f0dd 24px); }
.tab::after { right: -24px; background: radial-gradient(circle at 100% 0, transparent 23px, #f4f0dd 24px); }
.favicon { width: 22px; height: 22px; }
.tab-title {
  flex: 1;
  margin: 0 16px 0 21px;
  overflow: hidden;
  white-space: nowrap;
  font-size: 24px;
  line-height: 32px;
  color: #111;
  -webkit-mask-image: linear-gradient(90deg, #000 84%, transparent 98%);
  mask-image: linear-gradient(90deg, #000 84%, transparent 98%);
}
.new-tab { margin: 0 0 12px 30px; }

.toolbar {
  flex: none;
  display: flex;
  align-items: center;
  height: 92px;
  padding: 0 8px;
  border-radius: 20px 20px 0 0;
  background: #f4f0dd;
}
.tool, .ext { width: 72px; height: 56px; flex: none; }
.dim { opacity: .42; }
.omnibox {
  flex: 1;
  display: flex;
  align-items: center;
  height: 68px;
  margin: 0 16px;
  padding: 0 31px 0 10px;
  border-radius: 34px;
  background: #fbf8f0;
}
.site-info { width: 48px; height: 48px; border-radius: 50%; background: #f4f0dd; }
.url {
  flex: 1;
  min-width: 0;
  margin-left: 16px;
  padding: 0;
  border: 0;
  outline: 0;
  font: 28px/40px Inter, sans-serif;
  color: transparent;
  background: linear-gradient(90deg, #1b1b1b 274px, #6e6d6a 274px);
  -webkit-background-clip: text;
  background-clip: text;
}
.extensions { display: flex; align-items: center; }
.extensions .rule { margin: 0 16px; }
.rule { flex: none; width: 4px; height: 32px; border-radius: 2px; background: #d85246; }
.otter { color: #2c62dc; }
.profile { width: 40px; height: 40px; margin: 0 16px; border-radius: 50%; background: #3a877b; color: #fff; font-size: 20px; }

.bookmarks {
  flex: none;
  display: flex;
  align-items: center;
  gap: 36px;
  height: 70px;
  padding: 0 30px 12px 26px;
  border-bottom: 2px solid #bdb8a6;
  background: #f4f0dd;
  font-size: 24px;
  color: #111;
  white-space: nowrap;
}
.bookmarks a { display: flex; align-items: center; gap: 12px; }
.bookmarks > .rule { margin: 0 -8px 0 -6px; }
.bm { width: 32px; height: 32px; }
.otter-link svg { color: #5b86ee; }
.bookmarks-end { display: flex; align-items: center; gap: 34px; margin-left: auto; }
.bookmarks-end a { gap: 14px; }

/* Portfolio page */
.page {
  flex: 1;
  min-height: 0;
  overflow: hidden;
  color: #e6e9fd;
  font-size: 31px;
  line-height: 50px;
  background: radial-gradient(circle 1070px at 20% -180px, #101a2c, transparent) #e27c9e;
}
.container { width: 75%; max-width: 2200px; margin: 0 auto; }
.site-header { padding: 24px 0; border-bottom: 2px solid #232a3d; background: rgba(11, 10, 18, .6); }
.header-row { display: flex; justify-content: space-between; align-items: center; }
.logo {
  display: grid;
  place-items: center;
  width: 80px;
  height: 80px;
  border-radius: 16px;
  background: #e27c9e;
  color: #0b1022;
  font-size: 30px;
  font-weight: 800;
}
.site-nav { display: flex; gap: 32px; }
.nav-button {
  padding: 0 23px;
  border: 2px solid #1f2a44;
  border-radius: 20px;
  background: #101322;
  color: #e6e9fd;
  font-size: 25px;
  font-weight: 500;
  line-height: 62px;
  box-shadow: 0 3px 12px rgba(226, 124, 158, .4);
}
.hero { display: flex; flex-direction: column; align-items: center; padding: 96px 0 160px; }
.avatar { width: 256px; height: 256px; border: 8px solid #1b2340; border-radius: 50%; }
.hero h1 { margin: 72px 0 46px; font-size: 60px; line-height: 76px; font-weight: 700; }
.hero p { margin-bottom: 34px; font-size: 30px; color: #c5a6ca; }
.actions { display: flex; gap: 24px; }
.btn {
  padding: 0 24px;
  border: 2px solid #1f2a44;
  border-radius: 20px;
  line-height: 84px;
}
.primary { background: #101322; }
h2 { margin-bottom: 48px; font-size: 46px; line-height: 60px; font-weight: 700; }
.columns { display: grid; grid-template-columns: 1fr 1fr; gap: 32px; margin-bottom: 82px; }
.skills { display: flex; gap: 16px; }
.skills li {
  padding: 0 16px;
  border: 2px solid #1f2a44;
  border-radius: 33px;
  background: #131728;
  font-size: 28px;
  line-height: 62px;
}
.cards { display: grid; grid-template-columns: repeat(3, 1fr); gap: 32px; }
.card { overflow: hidden; border: 2px solid #1f2a44; border-radius: 28px; }
.card svg { width: 100%; aspect-ratio: 16 / 9; }

/* Dock */
.dock {
  position: relative;
  flex: none;
  display: flex;
  align-items: center;
  height: 106px;
  margin: 4px 70px 0;
  padding: 0 20px 6px 14px;
  border: 2px solid rgba(255, 255, 255, .22);
  border-radius: 36px;
  box-shadow: 0 0 72px rgba(20, 20, 20, .32);
  background: linear-gradient(90deg, #66715b 0%, #6f7c67 8%, #86927f 17%, #808861 24%, #97896c 29%, #918566 32%, #b69a80 37%, #aaa275 39%, #939a60 41%, #7f8c60 45%, #a48375 50%, #85805c 53%, #707a56 56%, #767d60 59%, #b9939d 64%, #b58f98 69%, #8f8070 73%, #9e8478 77%, #b88a8d 81%, #a27f7c 84%, #8a776b 89%, #7d756a 94%, #777668 100%);
}
.apps-row { flex: 1; display: flex; justify-content: space-between; }
.app { position: relative; width: 68px; height: 68px; }
.app svg { overflow: visible; }
.app > svg { width: 68px; height: 68px; filter: drop-shadow(0 1px 1px rgba(0, 0, 0, .35)); }
.running::after {
  content: "";
  position: absolute;
  left: 30px;
  bottom: -18px;
  width: 8px;
  height: 8px;
  border-radius: 50%;
  background: #0c0d06;
}
.badge {
  position: absolute;
  top: -8px;
  right: -10px;
  min-width: 32px;
  height: 32px;
  border-radius: 16px;
  background: #e04f42;
  color: #fff;
  font-size: 18px;
  line-height: 32px;
  text-align: center;
}
.dock-rule { width: 2px; height: 78px; margin: 0 28px 0 30px; background: #4f4741; }
.doc { width: 72px; height: 80px; margin-right: 18px; }
.trash { width: 62px; height: 80px; }
```
